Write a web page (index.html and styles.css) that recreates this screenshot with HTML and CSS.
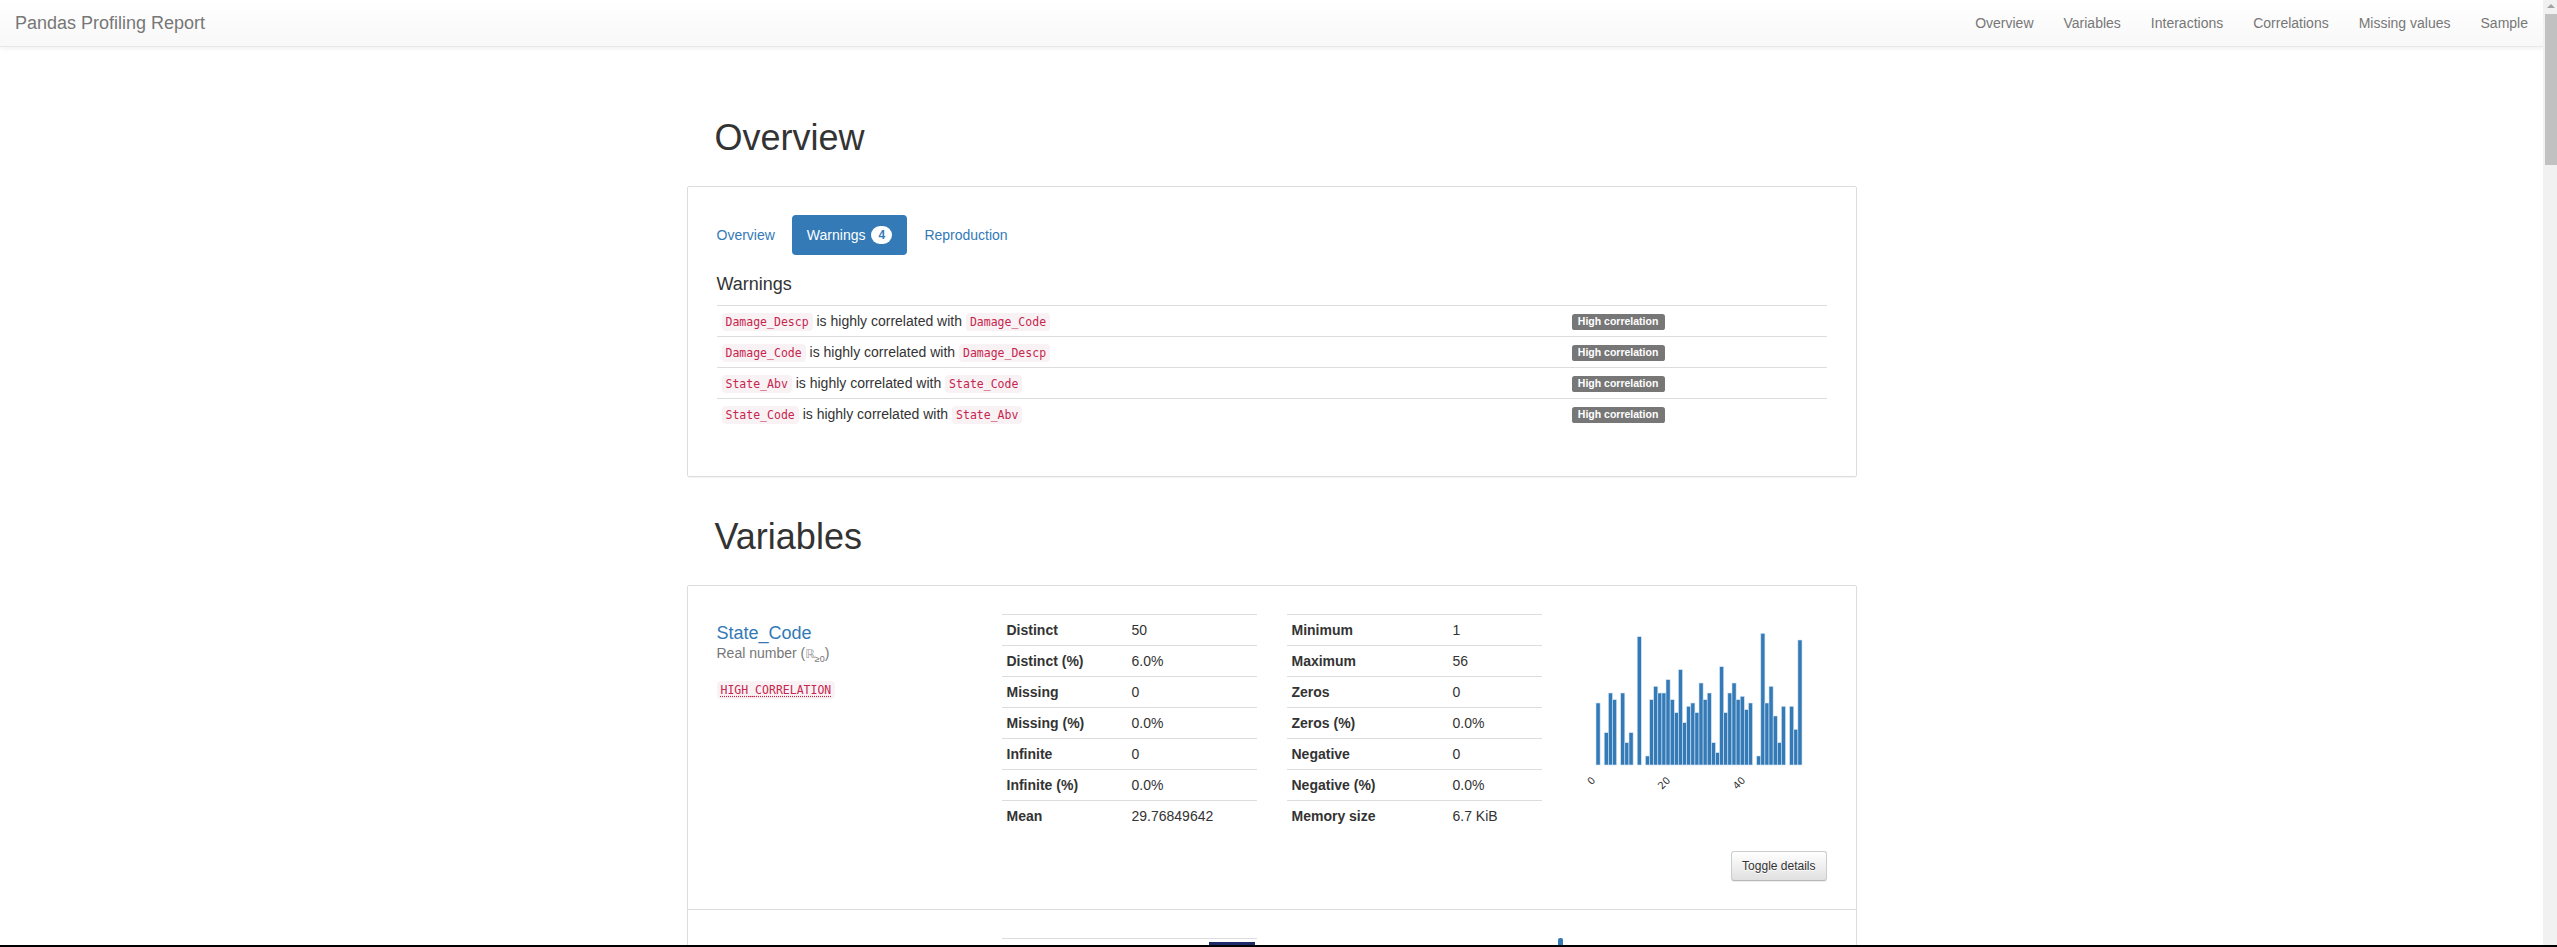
FILE: index.html
```html
<!DOCTYPE html>
<html lang="en">
<head>
<meta charset="utf-8">
<title>Pandas Profiling Report</title>
<link rel="stylesheet" href="styles.css">
</head>
<body>
<nav class="navbar">
  <a class="brand" href="#">Pandas Profiling Report</a>
  <ul class="nav-links">
    <li><a href="#overview">Overview</a></li>
    <li><a href="#variables">Variables</a></li>
    <li><a href="#interactions">Interactions</a></li>
    <li><a href="#correlations">Correlations</a></li>
    <li><a href="#missing">Missing values</a></li>
    <li><a href="#sample">Sample</a></li>
  </ul>
</nav>

<main class="container">
  <section class="section" id="overview">
    <h1 class="page-title">Overview</h1>
    <div class="panel">
      <ul class="pills">
        <li><a href="#">Overview</a></li>
        <li class="active"><a href="#">Warnings <span class="badge">4</span></a></li>
        <li><a href="#">Reproduction</a></li>
      </ul>
      <div class="tab-pane">
        <h4 class="sub-title">Warnings</h4>
        <table class="warn-table">
          <colgroup><col class="warn-col-msg"><col></colgroup>
          <tr><td><code>Damage_Descp</code> is highly correlated with <code>Damage_Code</code></td><td><span class="label">High correlation</span></td></tr>
          <tr><td><code>Damage_Code</code> is highly correlated with <code>Damage_Descp</code></td><td><span class="label">High correlation</span></td></tr>
          <tr><td><code>State_Abv</code> is highly correlated with <code>State_Code</code></td><td><span class="label">High correlation</span></td></tr>
          <tr><td><code>State_Code</code> is highly correlated with <code>State_Abv</code></td><td><span class="label">High correlation</span></td></tr>
        </table>
      </div>
    </div>
  </section>

  <section class="section" id="variables">
    <h1 class="page-title">Variables</h1>
    <div class="panel panel-list">
      <div class="var-item">
        <div class="var-row">
          <div class="col">
            <a class="var-name" href="#">State_Code</a>
            <div class="var-type">Real number (<span class="reals">ℝ</span><sub>≥0</sub>)</div>
            <code class="var-alert"><abbr title="This variable is highly correlated with another variable">HIGH_CORRELATION</abbr></code>
          </div>
          <div class="col">
            <table class="stats">
              <colgroup><col class="k1"><col></colgroup>
              <tr><th>Distinct</th><td>50</td></tr>
              <tr><th>Distinct (%)</th><td>6.0%</td></tr>
              <tr><th>Missing</th><td>0</td></tr>
              <tr><th>Missing (%)</th><td>0.0%</td></tr>
              <tr><th>Infinite</th><td>0</td></tr>
              <tr><th>Infinite (%)</th><td>0.0%</td></tr>
              <tr><th>Mean</th><td>29.76849642</td></tr>
            </table>
          </div>
          <div class="col">
            <table class="stats">
              <colgroup><col class="k2"><col></colgroup>
              <tr><th>Minimum</th><td>1</td></tr>
              <tr><th>Maximum</th><td>56</td></tr>
              <tr><th>Zeros</th><td>0</td></tr>
              <tr><th>Zeros (%)</th><td>0.0%</td></tr>
              <tr><th>Negative</th><td>0</td></tr>
              <tr><th>Negative (%)</th><td>0.0%</td></tr>
              <tr><th>Memory size</th><td>6.7 KiB</td></tr>
            </table>
          </div>
          <div class="col">
            <svg class="histogram" width="255" height="200" viewBox="0 0 255 200">
              <g class="bars">
                <rect x="24.0" y="89.0" width="4.12" height="62.0"/>
                <rect x="32.2" y="118.7" width="4.12" height="32.3"/>
                <rect x="36.4" y="79.0" width="4.12" height="72.0"/>
                <rect x="40.5" y="85.7" width="4.12" height="65.3"/>
                <rect x="48.7" y="79.0" width="4.12" height="72.0"/>
                <rect x="52.8" y="128.7" width="4.12" height="22.3"/>
                <rect x="57.0" y="118.7" width="4.12" height="32.3"/>
                <rect x="65.2" y="22.7" width="4.12" height="128.3"/>
                <rect x="73.4" y="142.0" width="4.12" height="9.0"/>
                <rect x="77.6" y="85.7" width="4.12" height="65.3"/>
                <rect x="81.7" y="72.3" width="4.12" height="78.7"/>
                <rect x="85.8" y="79.0" width="4.12" height="72.0"/>
                <rect x="89.9" y="79.0" width="4.12" height="72.0"/>
                <rect x="94.0" y="65.7" width="4.12" height="85.3"/>
                <rect x="98.2" y="85.7" width="4.12" height="65.3"/>
                <rect x="102.3" y="98.7" width="4.12" height="52.3"/>
                <rect x="106.4" y="55.7" width="4.12" height="95.3"/>
                <rect x="110.5" y="108.7" width="4.12" height="42.3"/>
                <rect x="114.6" y="92.3" width="4.12" height="58.7"/>
                <rect x="118.8" y="89.0" width="4.12" height="62.0"/>
                <rect x="122.9" y="98.7" width="4.12" height="52.3"/>
                <rect x="127.0" y="69.0" width="4.12" height="82.0"/>
                <rect x="131.1" y="85.7" width="4.12" height="65.3"/>
                <rect x="135.2" y="79.0" width="4.12" height="72.0"/>
                <rect x="139.4" y="128.7" width="4.12" height="22.3"/>
                <rect x="143.5" y="138.7" width="4.12" height="12.3"/>
                <rect x="147.6" y="52.7" width="4.12" height="98.3"/>
                <rect x="151.7" y="98.7" width="4.12" height="52.3"/>
                <rect x="155.8" y="79.0" width="4.12" height="72.0"/>
                <rect x="160.0" y="69.0" width="4.12" height="82.0"/>
                <rect x="164.1" y="85.7" width="4.12" height="65.3"/>
                <rect x="168.2" y="82.3" width="4.12" height="68.7"/>
                <rect x="172.3" y="95.7" width="4.12" height="55.3"/>
                <rect x="176.4" y="89.0" width="4.12" height="62.0"/>
                <rect x="184.7" y="142.0" width="4.12" height="9.0"/>
                <rect x="188.8" y="19.3" width="4.12" height="131.7"/>
                <rect x="192.9" y="89.0" width="4.12" height="62.0"/>
                <rect x="197.0" y="72.3" width="4.12" height="78.7"/>
                <rect x="201.2" y="102.0" width="4.12" height="49.0"/>
                <rect x="205.3" y="128.7" width="4.12" height="22.3"/>
                <rect x="209.4" y="92.3" width="4.12" height="58.7"/>
                <rect x="217.6" y="92.3" width="4.12" height="58.7"/>
                <rect x="221.8" y="115.3" width="4.12" height="35.7"/>
                <rect x="225.9" y="26.0" width="4.12" height="125.0"/>
              </g>
              <g class="ticks">
                <text x="24" y="167" transform="rotate(-45 24 167)">0</text>
                <text x="99" y="167" transform="rotate(-45 99 167)">20</text>
                <text x="174" y="167" transform="rotate(-45 174 167)">40</text>
              </g>
            </svg>
          </div>
        </div>
        <div class="var-actions">
          <button class="btn" type="button">Toggle details</button>
        </div>
      </div>

      <div class="var-item var-item-next">
        <div class="var-row">
          <div class="col"></div>
          <div class="col">
            <div class="mini-table">
              <div class="mini-row"><span class="freq-bar"></span></div>
            </div>
          </div>
          <div class="col"></div>
          <div class="col">
            <svg class="legend" width="40" height="12" viewBox="0 0 40 12">
              <rect x="1" y="0" width="5" height="9" rx="2"/>
            </svg>
          </div>
        </div>
      </div>
    </div>
  </section>
</main>

<div class="fake-scrollbar" aria-hidden="true">
  <span class="fake-scrollbar-arrow"></span>
  <span class="fake-scrollbar-thumb"></span>
</div>
<div class="screen-edge"></div>
</body>
</html>
```

FILE: styles.css
```css
body {
  margin: 0 14px 0 0;
  font-family: "Liberation Sans", Arial, Helvetica, sans-serif;
  font-size: 14px;
  line-height: 20px;
  color: #333;
  background: #fff;
}

a {
  color: #337ab7;
  text-decoration: none;
}

/* ---------- navbar ---------- */
.navbar {
  height: 46px;
  border-bottom: 1px solid #e7e7e7;
  background: linear-gradient(to bottom, #fff 0, #f8f8f8 100%);
  box-shadow: 0 1px 5px rgba(0, 0, 0, 0.075);
  display: flex;
  justify-content: space-between;
  align-items: center;
}

.brand {
  padding-left: 15px;
  font-size: 18px;
  line-height: 20px;
  color: #777;
}

.nav-links {
  display: flex;
  list-style: none;
  margin: 0;
  padding: 0;
}

.nav-links a {
  display: block;
  padding: 0 15px;
  color: #777;
}

/* ---------- layout ---------- */
.container {
  width: 1170px;
  margin: 0 auto;
}

.section {
  margin-top: 40px;
}

.section:first-child {
  margin-top: 71px;
}

.page-title {
  margin: 0 0 28px;
  padding-left: 28px;
  font-size: 36px;
  line-height: 40px;
  font-weight: 500;
  color: #333;
}

.panel {
  border: 1px solid #ddd;
  border-radius: 2px;
  box-shadow: 0 1px 1px rgba(0, 0, 0, 0.05);
  padding: 28px 14px 47px;
}

.panel-list {
  padding: 0;
}

/* ---------- pills ---------- */
.pills {
  display: flex;
  gap: 2px;
  list-style: none;
  margin: 0;
  padding: 0;
}

.pills a {
  display: block;
  padding: 10px 15px;
  border-radius: 4px;
  color: #337ab7;
}

.pills .active a {
  background: #337ab7;
  color: #fff;
}

.badge {
  display: inline-block;
  min-width: 7px;
  padding: 3px 7px;
  margin-left: 2px;
  font-size: 12px;
  font-weight: bold;
  line-height: 12px;
  text-align: center;
  vertical-align: 1px;
  border-radius: 10px;
  background: #fff;
  color: #337ab7;
}

.tab-pane {
  padding: 0 15px;
}

.sub-title {
  margin: 19px 0 11px;
  font-size: 18px;
  line-height: 20px;
  font-weight: 500;
}

/* ---------- warnings ---------- */
.warn-table {
  width: 100%;
  border-collapse: collapse;
  table-layout: fixed;
}

.warn-col-msg {
  width: 850px;
}

.warn-table td {
  height: 20px;
  border-top: 1px solid #ddd;
  padding: 5px;
  vertical-align: top;
}

code {
  font-family: "DejaVu Sans Mono", "Liberation Mono", monospace;
  font-size: 11.5px;
  line-height: 1;
  padding: 2px 4px;
  color: #c7254e;
  background: #f9f2f4;
  border-radius: 4px;
}

.label {
  display: inline-block;
  padding: 0.2em 0.6em 0.3em;
  font-size: 10.5px;
  font-weight: bold;
  line-height: 1;
  color: #fff;
  background: #777;
  border-radius: 0.25em;
  vertical-align: 1px;
}

/* ---------- variables ---------- */
.var-item {
  padding: 28px 14px 28px;
  border-bottom: 1px solid #ddd;
}

.var-row {
  display: grid;
  grid-template-columns: repeat(4, 285px);
}

.col {
  padding: 0 15px;
}

.var-name {
  display: block;
  margin-top: 9px;
  font-size: 18px;
  line-height: 20px;
}

.var-type {
  color: #777;
  font-size: 14px;
  line-height: 20px;
}

.reals {
  font-family: "DejaVu Sans", sans-serif;
  font-size: 12px;
  color: #999;
}

.var-type sub {
  font-size: 9px;
  line-height: 0;
}

.var-alert {
  display: inline-block;
  margin-top: 17px;
  line-height: 14px;
}

.var-alert abbr {
  text-decoration: underline dotted;
  text-underline-offset: 2px;
}

.stats {
  width: 100%;
  border-collapse: collapse;
  table-layout: fixed;
}

.k1 {
  width: 125px;
}

.k2 {
  width: 161px;
}

.stats th,
.stats td {
  height: 20px;
  border-top: 1px solid #ddd;
  padding: 5px;
  text-align: left;
  vertical-align: top;
}

.stats th {
  font-weight: bold;
}

.histogram {
  display: block;
}

.bars rect {
  fill: #337ab7;
  stroke: #d6e4f2;
  stroke-width: 0.6;
}

.ticks text {
  font-family: "DejaVu Sans", sans-serif;
  font-size: 10px;
  fill: #333;
  text-anchor: end;
}

.var-actions {
  display: flex;
  justify-content: flex-end;
  margin-top: 20px;
  padding: 0 15px;
}

.btn {
  font-family: "Liberation Sans", Arial, sans-serif;
  font-size: 12px;
  line-height: 18px;
  padding: 5px 10px;
  color: #333;
  border: 1px solid #ccc;
  border-bottom-color: #b8b8b8;
  border-radius: 3px;
  background: linear-gradient(to bottom, #fff 0, #e0e0e0 100%);
  text-shadow: 0 1px 0 #fff;
  box-shadow: inset 0 1px 0 rgba(255, 255, 255, 0.15), 0 1px 1px rgba(0, 0, 0, 0.075);
}

/* next (mostly hidden) variable */
.mini-table {
  border-top: 1px solid #ddd;
}

.mini-row {
  display: flex;
  justify-content: flex-end;
  padding: 3px 2px 0 0;
  height: 40px;
}

.freq-bar {
  display: block;
  width: 46px;
  height: 12px;
  background: #1f2a6b;
}

.legend {
  display: block;
  margin-left: -15px;
}

.legend rect {
  fill: #337ab7;
}

/* ---------- window chrome ---------- */
.fake-scrollbar {
  position: fixed;
  top: 0;
  right: 0;
  bottom: 0;
  width: 14px;
  background: #f1f1f1;
}

.fake-scrollbar-arrow {
  position: absolute;
  top: 4px;
  left: 4px;
  width: 0;
  height: 0;
  border-left: 4px solid transparent;
  border-right: 4px solid transparent;
  border-bottom: 4px solid #a3a3a3;
}

.fake-scrollbar-thumb {
  position: absolute;
  top: 14px;
  left: 2px;
  right: 0;
  height: 151px;
  background: #c1c1c1;
}

.screen-edge {
  position: fixed;
  left: 0;
  right: 0;
  bottom: 0;
  height: 2px;
  background: #000;
}
```
